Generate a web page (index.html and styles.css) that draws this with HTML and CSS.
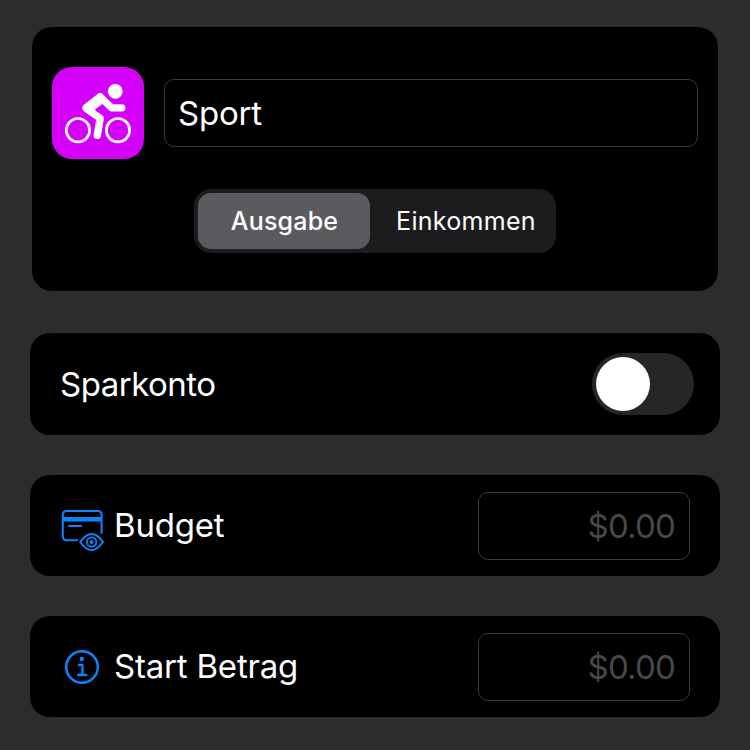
FILE: index.html
```html
<!DOCTYPE html>
<html lang="de">
<head>
<meta charset="utf-8">
<title>Kategorie</title>
<link rel="stylesheet" href="styles.css">
</head>
<body>
<main class="form">
  <section class="card category">
    <div class="identity">
      <div class="category-icon">
        <svg viewBox="0 0 92 92" fill="none" stroke="#fff" stroke-linecap="round" stroke-linejoin="round">
          <circle cx="26" cy="63.2" r="11.7" stroke-width="2.7"/>
          <circle cx="66" cy="63.2" r="11.7" stroke-width="2.7"/>
          <circle cx="63.3" cy="24.3" r="7.4" fill="#fff" stroke="none"/>
          <path d="M48.3 29.8L59.6 40.8H69.8" stroke-width="7.2"/>
          <path d="M34.5 41.7L48.2 51.2L45.3 68.3" stroke-width="7.4"/>
          <path d="M32.2 37.4L46 26.8Q48.6 25.2 51 27.5L52.5 34L50.8 36.7L42.8 42.6L46 47L36 46.5L31.3 43Q28.8 40 32.2 37.4Z" fill="#fff" stroke="none"/>
        </svg>
      </div>
      <div class="field name-field">Sport</div>
    </div>
    <div class="segments">
      <div class="segment selected"><span>Ausgabe</span></div>
      <div class="segment"><span>Einkommen</span></div>
    </div>
  </section>

  <section class="card row savings">
    <span class="label savings-label">Sparkonto</span>
    <div class="switch"><div class="knob"></div></div>
  </section>

  <section class="card row amount-row">
    <svg class="row-icon" viewBox="0 0 44 44" fill="none" stroke="#0a84ff" stroke-width="2" stroke-linecap="round" stroke-linejoin="round">
      <path d="M17 36.3H6.8Q2.8 36.3 2.8 32.3V11Q2.8 7 6.8 7H37.6Q41.6 7 41.6 11V29"/>
      <path d="M2.8 15.3H41.6" stroke-width="4.6" stroke-linecap="butt"/>
      <path d="M9 22H21"/>
      <path d="M20.2 38Q31.6 21.9 43 38Q31.6 54.1 20.2 38Z" stroke-width="2"/>
      <circle cx="31.6" cy="38" r="4.7" stroke-width="1.8"/>
      <circle cx="31.6" cy="38" r="1.9" fill="#0a84ff" stroke="none"/>
    </svg>
    <span class="label">Budget</span>
    <div class="field amount">$0.00</div>
  </section>

  <section class="card row amount-row">
    <svg class="row-icon" viewBox="0 0 44 44" fill="none" stroke="#0a84ff" stroke-width="2.5" stroke-linecap="round" stroke-linejoin="round">
      <circle cx="22" cy="22" r="15.8"/>
      <circle cx="21.8" cy="14" r="2.2" fill="#0a84ff" stroke="none"/>
      <path d="M18.8 20H22.5V30M18 30H26.5" stroke-width="2.3"/>
    </svg>
    <span class="label">Start Betrag</span>
    <div class="field amount">$0.00</div>
  </section>
</main>
</body>
</html>
```
FILE: styles.css
```css
* {
  box-sizing: border-box;
}

body {
  margin: 0;
  background: #2c2c2e;
  color: #fff;
  font-family: Inter, "Liberation Sans", sans-serif;
  font-size: 33px;
  line-height: 40px;
}

.form {
  width: 750px;
  height: 750px;
  padding: 27px 30px 0;
  overflow: hidden;
}

.card {
  background: #000;
  border-radius: 20px;
}

.category {
  height: 264px;
  margin: 0 2px 42px;
  padding: 40px 20px 0;
}

.identity {
  display: flex;
  align-items: center;
  gap: 20px;
}

.category-icon {
  width: 92px;
  height: 92px;
  border-radius: 20px;
  background: #d500f9;
}

.category-icon svg {
  display: block;
}

.field {
  height: 68px;
  border: 1px solid #38383a;
  border-radius: 10px;
  line-height: 66px;
  white-space: nowrap;
}

.name-field {
  flex: 1;
  padding-left: 13px;
  letter-spacing: -0.2px;
}

.segments {
  display: flex;
  width: 362px;
  height: 64px;
  margin: 30px auto 0;
  padding: 4px;
  border-radius: 17px;
  background: #1c1c1e;
}

.segment {
  display: flex;
  flex: 1;
  align-items: center;
  justify-content: center;
  padding-left: 10px;
  border-radius: 13px;
  font-size: 25px;
  letter-spacing: 0.3px;
}

.segment.selected {
  flex: 0 0 172px;
  padding-left: 1px;
  background: #5b5a5f;
  font-weight: 550;
  letter-spacing: 0.2px;
}

.row {
  display: flex;
  align-items: center;
}

.savings {
  height: 102px;
  margin-bottom: 40px;
  padding: 0 26px 0 30px;
}

.savings-label {
  letter-spacing: -0.5px;
}

.switch {
  width: 102px;
  height: 62px;
  margin-left: auto;
  padding: 4px;
  border-radius: 31px;
  background: #262628;
}

.knob {
  width: 54px;
  height: 54px;
  border-radius: 50%;
  background: #fff;
}

.amount-row {
  height: 101px;
  margin-bottom: 40px;
  padding: 0 30px;
}

.amount-row .label {
  margin-bottom: 2px;
  letter-spacing: -0.2px;
}

.row-icon {
  width: 44px;
  height: 44px;
  margin: 1px 10px 0 0;
  overflow: visible;
}

.amount {
  width: 212px;
  margin-left: auto;
  padding-right: 14px;
  color: #48484a;
  letter-spacing: -0.8px;
  text-align: right;
}
```
